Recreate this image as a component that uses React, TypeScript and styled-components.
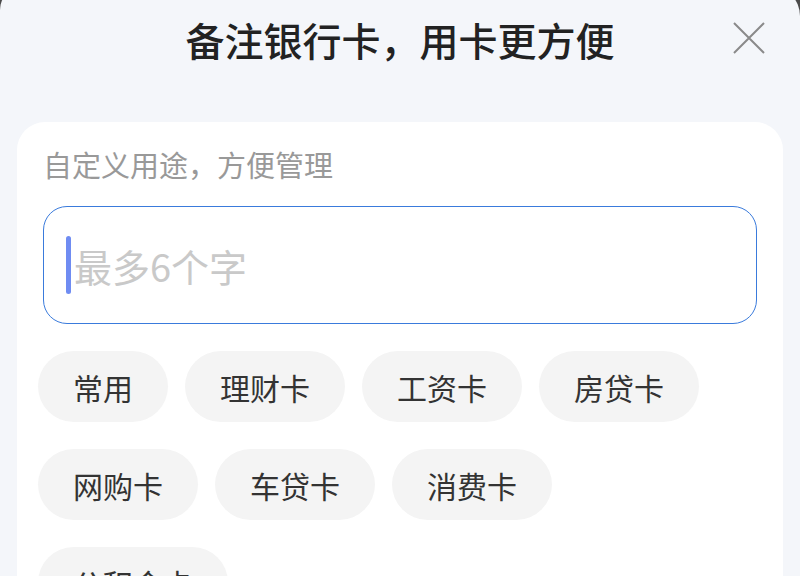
import styled, { createGlobalStyle } from "styled-components";

const TAGS = ["常用", "理财卡", "工资卡", "房贷卡", "网购卡", "车贷卡", "消费卡", "公积金卡"];

const GlobalStyle = createGlobalStyle`
  html, body {
    margin: 0;
    padding: 0;
    background: #4b4b4b;
    overflow: hidden;
  }
  body {
    font-family: "Noto Sans CJK SC", "Noto Sans", sans-serif;
  }
`;

const App = () => (
  <>
    <GlobalStyle />
    <Sheet>
      <Header>
        <Title>备注银行卡，用卡更方便</Title>
        <CloseButton aria-label="关闭">
          <svg width="32" height="32" viewBox="0 0 32 32">
            <path d="M1 1 L31 31 M31 1 L1 31" stroke="#8a8a8a" strokeWidth="2" fill="none" />
          </svg>
        </CloseButton>
      </Header>
      <Card>
        <Label>自定义用途，方便管理</Label>
        <InputBox>
          <Caret />
          <TextInput placeholder="最多6个字" maxLength={6} />
        </InputBox>
        <TagList>
          {TAGS.map((tag) => (
            <Tag key={tag}>{tag}</Tag>
          ))}
        </TagList>
      </Card>
    </Sheet>
  </>
);

export default App;

const Sheet = styled.div`
  margin-top: -14px;
  min-height: 620px;
  background: #f4f6fa;
  border-radius: 24px 30px 0 0;
`;

const Header = styled.div`
  display: grid;
  grid-template-columns: 1fr auto 1fr;
  align-items: center;
  height: 112px;
`;

const Title = styled.h1`
  grid-column: 2;
  margin: 0 0 6px;
  font-size: 39px;
  font-weight: 500;
  color: #222;
  line-height: 1;
`;

const CloseButton = styled.button`
  grid-column: 3;
  justify-self: end;
  margin: 0 35px 9px 0;
  padding: 0;
  width: 32px;
  height: 32px;
  border: none;
  background: transparent;
  display: flex;
`;

const Card = styled.div`
  margin: 24px 17px 0;
  padding: 22px 26px 60px;
  background: #fff;
  border-radius: 28px;
`;

const Label = styled.p`
  margin: 0;
  font-size: 29px;
  line-height: 40px;
  color: #999;
`;

const InputBox = styled.div`
  margin-top: 22px;
  height: 118px;
  box-sizing: border-box;
  border: 1.5px solid #3a7bdc;
  border-radius: 24px;
  display: flex;
  align-items: center;
  gap: 3px;
  padding-left: 22px;
`;

const Caret = styled.span`
  width: 5px;
  height: 58px;
  border-radius: 3px;
  background: #6f8cf2;
`;

const TextInput = styled.input`
  flex: 1;
  min-width: 0;
  border: none;
  outline: none;
  padding: 0;
  background: transparent;
  font-family: inherit;
  font-size: 38px;
  color: #333;

  &::placeholder {
    color: #c9c9c9;
  }
`;

const TagList = styled.div`
  display: flex;
  flex-wrap: wrap;
  gap: 27px 17px;
  margin: 27px 0 0 -5px;
`;

const Tag = styled.button`
  display: inline-flex;
  align-items: center;
  height: 71px;
  padding: 0 35px;
  border: none;
  border-radius: 36px;
  background: #f4f4f4;
  font-family: inherit;
  font-size: 30px;
  color: #333;
`;
